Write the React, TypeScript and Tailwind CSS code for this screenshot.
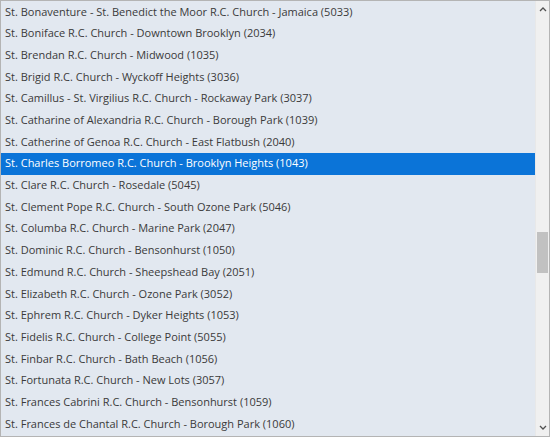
import React from "react";

const items = [
  "St. Bonaventure - St. Benedict the Moor R.C. Church - Jamaica (5033)",
  "St. Boniface R.C. Church - Downtown Brooklyn (2034)",
  "St. Brendan R.C. Church - Midwood (1035)",
  "St. Brigid R.C. Church - Wyckoff Heights (3036)",
  "St. Camillus - St. Virgilius R.C. Church - Rockaway Park (3037)",
  "St. Catharine of Alexandria R.C. Church - Borough Park (1039)",
  "St. Catherine of Genoa R.C. Church - East Flatbush (2040)",
  "St. Charles Borromeo R.C. Church - Brooklyn Heights (1043)",
  "St. Clare R.C. Church - Rosedale (5045)",
  "St. Clement Pope R.C. Church - South Ozone Park (5046)",
  "St. Columba R.C. Church - Marine Park (2047)",
  "St. Dominic R.C. Church - Bensonhurst (1050)",
  "St. Edmund R.C. Church - Sheepshead Bay (2051)",
  "St. Elizabeth R.C. Church - Ozone Park (3052)",
  "St. Ephrem R.C. Church - Dyker Heights (1053)",
  "St. Fidelis R.C. Church - College Point (5055)",
  "St. Finbar R.C. Church - Bath Beach (1056)",
  "St. Fortunata R.C. Church - New Lots (3057)",
  "St. Frances Cabrini R.C. Church - Bensonhurst (1059)",
  "St. Frances de Chantal R.C. Church - Borough Park (1060)",
];

export default function App() {
  return (
    <div
      className="w-[550px] h-[437px] border border-[#b4b4b4] bg-[#e2e8f0] flex overflow-hidden"
      style={{ fontFamily: '"Open Sans", sans-serif' }}
    >
      <div className="flex-1 flex flex-col overflow-hidden">
        {items.map((t, i) => (
          <div
            key={i}
            className={
              "h-[21.7px] shrink-0 flex items-center pl-[4px] text-[11px] whitespace-nowrap " +
              (i === 7 ? "bg-[#0b74d8] text-white" : "text-[#3a3a3a]")
            }
          >
            {t}
          </div>
        ))}
      </div>
      <div className="w-[14px] shrink-0 bg-[#f0f0f0] border-l border-[#e8e8e8] flex flex-col">
        <div className="h-[17px] flex items-center justify-center">
          <svg width="8" height="5" viewBox="0 0 8 5">
            <path d="M1 4 L4 1 L7 4" fill="none" stroke="#505050" strokeWidth="1.3" />
          </svg>
        </div>
        <div className="flex-1 flex flex-col">
          <div className="h-[214px]" />
          <div className="h-[41px] bg-[#c1c1c1] mx-[1px]" />
        </div>
        <div className="h-[17px] flex items-center justify-center">
          <svg width="8" height="5" viewBox="0 0 8 5">
            <path d="M1 1 L4 4 L7 1" fill="none" stroke="#505050" strokeWidth="1.3" />
          </svg>
        </div>
      </div>
    </div>
  );
}
